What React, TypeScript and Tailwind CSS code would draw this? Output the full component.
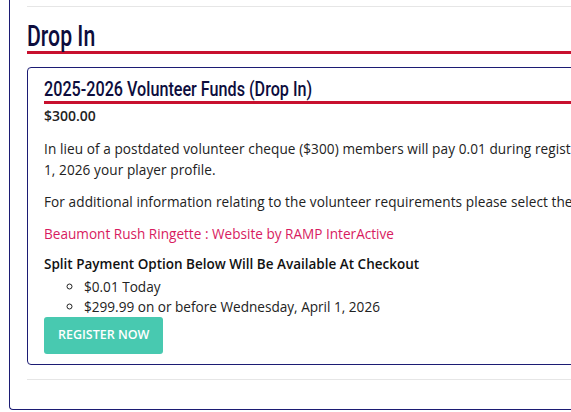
import React from "react";

const heading = "font-['Roboto',sans-serif] font-medium";
const body = "font-['Open_Sans',sans-serif]";

export default function App() {
  return (
    <div className={`w-[571px] h-[412px] overflow-hidden bg-white ${body}`}>
      <div className="ml-[9px] w-[700px] h-[410px] border-l border-b border-[#1c1c74] rounded-bl-[4px] pl-[17px]">
        <div className="pt-[6px]">
          <div className="h-px bg-[#e6e6e6]" />
        </div>

        <h2 className={`mt-[14px] text-[29.5px] leading-[30px] text-[#0d0d3d] border-b-[3px] border-[#c8102e] whitespace-nowrap ${heading}`}>
          <span className="inline-block origin-left scale-x-[0.72]">Drop In</span>
        </h2>

        <div className="mt-[13px] border border-[#1c1c74] rounded-[4px] pl-4 pb-[10px]">
          <h3 className={`pt-[10px] text-[21px] leading-[23px] text-[#0d0d3d] border-b-[3px] border-[#c8102e] whitespace-nowrap ${heading}`}>
            <span className="inline-block origin-left scale-x-[0.77]">2025-2026 Volunteer Funds (Drop In)</span>
          </h3>

          <div className="mt-[2px] text-[14px] leading-[20px] font-semibold text-[#222]">$300.00</div>

          <p className="mt-[12px] text-[13.6px] leading-[21px] tracking-[0.08px] text-[#222] whitespace-nowrap">
            In lieu of a postdated volunteer cheque ($300) members will pay 0.01 during registration and the remainder on or before April
            <br />
            1, 2026 your player profile.
          </p>

          <p className="mt-[11px] text-[13.6px] leading-[21px] tracking-[0.08px] text-[#222] whitespace-nowrap">
            For additional information relating to the volunteer requirements please select the link below.
          </p>

          <p className="mt-[11px] text-[13.6px] leading-[21px] text-[#d81b60] whitespace-nowrap">
            Beaumont Rush Ringette : Website by RAMP InterActive
          </p>

          <div className="mt-[10px] text-[13.5px] leading-[21px] font-semibold text-[#111] whitespace-nowrap">
            Split Payment Option Below Will Be Available At Checkout
          </div>

          <ul className="mt-[2px] pl-[40px] list-[circle] text-[13.6px] leading-[20px] text-[#222] whitespace-nowrap">
            <li>$0.01 Today</li>
            <li>$299.99 on or before Wednesday, April 1, 2026</li>
          </ul>

          <button className="h-[37px] px-[14px] rounded-[3px] bg-[#48c9b0] text-white text-[12.5px] font-semibold uppercase">
            Register Now
          </button>
        </div>

        <div className="mt-[14px] h-px bg-[#e6e6e6]" />
      </div>
    </div>
  );
}
